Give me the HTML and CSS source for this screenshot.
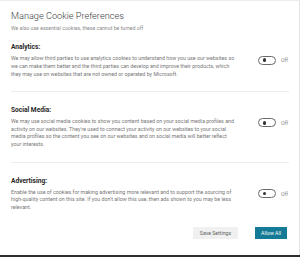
FILE: index.html
```html
<!DOCTYPE html>
<html>
<head>
<meta charset="utf-8">
<link rel="stylesheet" href="styles.css">
</head>
<body>
<div class="dialog">
  <h1 class="title">Manage Cookie Preferences</h1>
  <p class="subtitle">We also use essential cookies, these cannot be turned off</p>

  <section class="section">
    <h2 class="heading">Analytics:</h2>
    <div class="row">
      <p class="text">We may allow third parties to use analytics cookies to understand how you use our websites so we can make them better and the third parties can develop and improve their products, which they may use on websites that are not owned or operated by Microsoft.</p>
      <div class="switch"><span class="toggle"><span class="knob"></span></span><span class="state">Off</span></div>
    </div>
  </section>
  <hr class="divider">
  <section class="section">
    <h2 class="heading">Social Media:</h2>
    <div class="row">
      <p class="text">We may use social media cookies to show you content based on your social media profiles and activity on our websites. They're used to connect your activity on our websites to your social media profiles so the content you see on our websites and on social media will better reflect your interests.</p>
      <div class="switch"><span class="toggle"><span class="knob"></span></span><span class="state">Off</span></div>
    </div>
  </section>
  <hr class="divider">
  <section class="section">
    <h2 class="heading">Advertising:</h2>
    <div class="row">
      <p class="text">Enable the use of cookies for making advertising more relevant and to support the sourcing of high-quality content on this site. If you don't allow this use, then ads shown to you may be less relevant.</p>
      <div class="switch"><span class="toggle"><span class="knob"></span></span><span class="state">Off</span></div>
    </div>
  </section>

  <div class="actions">
    <button class="btn btn-secondary">Save Settings</button>
    <button class="btn btn-primary">Allow All</button>
  </div>
</div>
</body>
</html>
```

FILE: styles.css
```css
* { box-sizing: border-box; }
html, body { margin: 0; padding: 0; }
body {
  width: 300px;
  height: 257px;
  background: #2a2c30;
  font-family: Roboto, "Liberation Sans", sans-serif;
  overflow: hidden;
}
.dialog {
  width: 300px;
  height: 255px;
  background: #fff;
  border-top: 1px solid #ececec;
  border-right: 1px solid #e4e4e4;
  padding: 9px 11px 0 11px;
}
.title {
  margin: 0;
  font-size: 9.2px;
  line-height: 12px;
  font-weight: 300;
  color: #3a3a3a;
}
.subtitle {
  margin: 2px 0 0 0;
  font-size: 5.2px;
  line-height: 8px;
  color: #8a8a8a;
}
.section { margin-top: 11px; }
.divider {
  margin: 12.5px 0 14px 0;
  border: 0;
  border-top: 1px solid #ececec;
  width: 278px;
}
.divider + .section { margin-top: 0; }
.heading {
  margin: 0;
  font-size: 6.6px;
  line-height: 8px;
  font-weight: 700;
  color: #262626;
}
.row {
  display: flex;
  align-items: flex-start;
  margin-top: 4px;
}
.text {
  margin: 0;
  width: 224px;
  flex: none;
  font-size: 5.3px;
  line-height: 7.8px;
  color: #777;
}
.switch {
  display: flex;
  align-items: center;
  margin-left: 23px;
  margin-top: 0.5px;
}
.toggle {
  width: 18px;
  height: 9px;
  border: 0.8px solid #6a6a6a;
  border-radius: 5px;
  display: flex;
  align-items: center;
  padding-left: 3.5px;
}
.knob {
  width: 3.8px;
  height: 3.8px;
  border-radius: 50%;
  background: #333;
}
.state {
  margin-left: 5px;
  font-size: 5.2px;
  color: #888;
}
.actions {
  display: flex;
  justify-content: flex-end;
  gap: 17px;
  margin-top: 15.5px;
}
.btn {
  height: 12px;
  border: 0;
  font-family: Roboto, "Liberation Sans", sans-serif;
  font-size: 5.2px;
  padding: 0;
  cursor: pointer;
}
.btn-secondary {
  width: 45px;
  background: #f0f0f0;
  color: #666;
}
.btn-primary {
  width: 32px;
  background: #157a96;
  color: #fff;
  margin-right: 1px;
}
```
